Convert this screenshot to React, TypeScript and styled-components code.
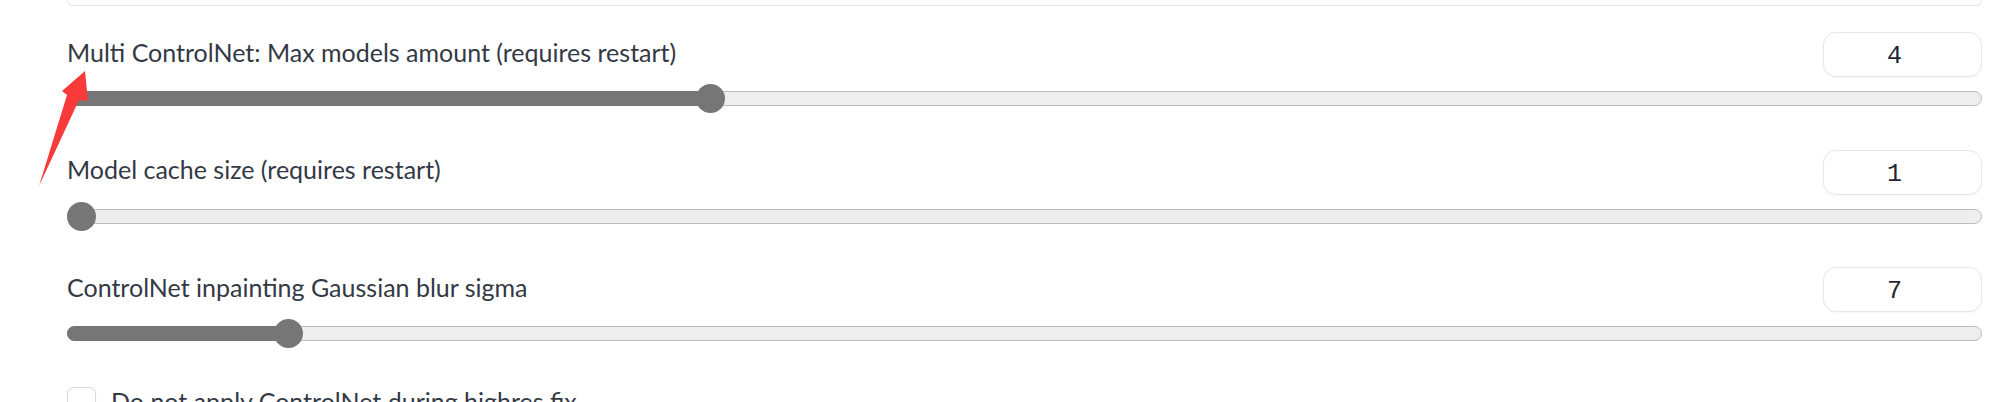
import React from "react";
import styled, { createGlobalStyle } from "styled-components";

const GlobalStyle = createGlobalStyle`
  html, body {
    margin: 0;
    padding: 0;
    background: #ffffff;
    overflow: hidden;
  }
`;

const Page = styled.div`
  position: relative;
  width: 2000px;
  height: 402px;
  box-sizing: border-box;
  padding: 0 18px 0 67px;
  font-family: Lato, "Noto Sans", sans-serif;
  color: #333945;
`;

const TopPanel = styled.div`
  height: 6px;
  box-sizing: border-box;
  border: 1px solid #e4e4ec;
  border-top: none;
  border-radius: 0 0 10px 10px;
`;

const SettingsList = styled.div`
  display: flex;
  flex-direction: column;
  gap: 35.5px;
  margin-top: 26px;
`;

const SliderSetting = styled.div`
  display: flex;
  flex-direction: column;
  gap: 6px;
`;

const Header = styled.div`
  display: flex;
  align-items: center;
  justify-content: space-between;
  height: 45px;
`;

const Label = styled.span`
  font-size: 25px;
  line-height: 30px;
  margin-bottom: 6px;
  color: #333945;
`;

const NumberBox = styled.div`
  width: 159px;
  height: 45px;
  box-sizing: border-box;
  border: 1px solid #e6e6ea;
  border-radius: 13px;
  background: #ffffff;
  box-shadow: 0 1px 2px rgba(0, 0, 0, 0.04);
  display: flex;
  align-items: center;
  justify-content: center;
  padding: 4px 16px 0 0;
  font-family: "Liberation Mono", "DejaVu Sans Mono", monospace;
  font-size: 25px;
  color: #1f2633;
`;

const SliderArea = styled.div`
  position: relative;
  height: 31px;
  display: flex;
  align-items: center;
`;

const Rail = styled.div`
  flex: 1;
  height: 15px;
  box-sizing: border-box;
  background: #eeeeee;
  border: 1.5px solid #bcbcbc;
  border-radius: 8px;
`;

const Fill = styled.div`
  position: absolute;
  left: 0;
  top: 8px;
  height: 15px;
  border-radius: 8px;
  background: #767676;
`;

const Thumb = styled.div`
  position: absolute;
  top: 1px;
  width: 29px;
  height: 29px;
  border-radius: 50%;
  background: #767676;
`;

const CheckRow = styled.label`
  display: flex;
  align-items: flex-start;
  gap: 15px;
  margin-top: 2.5px;
`;

const CheckBox = styled.span`
  width: 29px;
  height: 29px;
  flex: none;
  box-sizing: border-box;
  border: 1px solid #d6d6dc;
  border-radius: 7px;
  background: #ffffff;
  box-shadow: 0 1px 2px rgba(0, 0, 0, 0.06);
`;

const CheckLabel = styled.span`
  font-size: 25px;
  line-height: 30px;
  margin-top: -1px;
  color: #333945;
`;

const Arrow = styled.svg`
  position: absolute;
  left: 0;
  top: 0;
  width: 120px;
  height: 200px;
  pointer-events: none;
`;

type SliderProps = { label: string; value: number; frac: number };

const SliderRow: React.FC<SliderProps> = ({ label, value, frac }) => (
  <SliderSetting>
    <Header>
      <Label>{label}</Label>
      <NumberBox>{value}</NumberBox>
    </Header>
    <SliderArea>
      <Rail />
      {frac > 0 && (
        <Fill style={{ width: `calc((100% - 29px) * ${frac} + 14.5px)` }} />
      )}
      <Thumb style={{ left: `calc((100% - 29px) * ${frac})` }} />
    </SliderArea>
  </SliderSetting>
);

const settings: SliderProps[] = [
  { label: "Multi ControlNet: Max models amount (requires restart)", value: 4, frac: 1 / 3 },
  { label: "Model cache size (requires restart)", value: 1, frac: 0 },
  { label: "ControlNet inpainting Gaussian blur sigma", value: 7, frac: 0.11 },
];

export default function App() {
  return (
    <>
      <GlobalStyle />
      <Page>
        <TopPanel />
        <SettingsList>
          {settings.map((s) => (
            <SliderRow key={s.label} {...s} />
          ))}
          <CheckRow>
            <CheckBox />
            <CheckLabel>Do not apply ControlNet during highres fix</CheckLabel>
          </CheckRow>
        </SettingsList>
        <Arrow viewBox="0 0 120 200">
          <polygon
            points="85,71 88,101 79,100 39,186 67,95 62,91"
            fill="#f93a3a"
          />
        </Arrow>
      </Page>
    </>
  );
}
